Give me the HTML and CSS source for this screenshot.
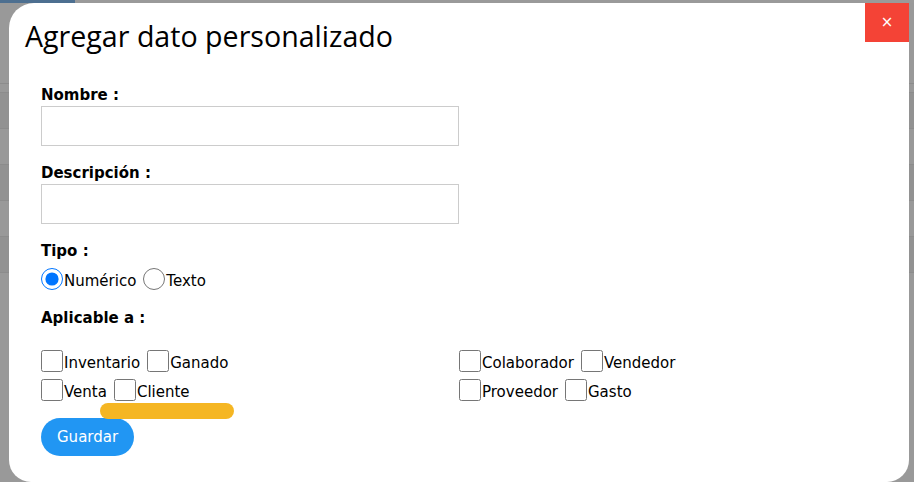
FILE: index.html
```html
<!DOCTYPE html>
<html lang="es">
<head>
<meta charset="utf-8">
<title>Agregar dato personalizado</title>
<link rel="stylesheet" href="styles.css">
</head>
<body>
<div class="backdrop">
  <div class="topbar"><div class="topbar-blue"></div></div>
  <div class="table">
    <div class="thead"></div>
    <div class="trow dark"></div>
    <div class="trow"></div>
    <div class="trow dark"></div>
    <div class="trow"></div>
    <div class="trow dark"></div>
  </div>
</div>

<div class="modal">
  <button class="close" type="button">&times;</button>
  <header class="modal-header">
    <h2 class="title">Agregar dato personalizado</h2>
  </header>
  <form class="form">
    <div class="group">
      <label class="label">Nombre :</label>
      <input class="field" type="text">
    </div>
    <div class="group">
      <label class="label">Descripción :</label>
      <input class="field" type="text">
    </div>
    <div class="group type-group">
      <label class="label">Tipo :</label>
      <div class="choice-row">
        <label class="choice"><input class="radio" type="radio" name="tipo" checked><span class="choice-text">Numérico</span></label>
        <label class="choice"><input class="radio" type="radio" name="tipo"><span class="choice-text">Texto</span></label>
      </div>
    </div>
    <div class="group applies">
      <label class="label">Aplicable a :</label>
      <div class="apply-grid">
        <div class="apply-col">
          <div class="choice-row">
            <label class="choice"><input class="check" type="checkbox"><span class="choice-text">Inventario</span></label>
            <label class="choice"><input class="check" type="checkbox"><span class="choice-text">Ganado</span></label>
          </div>
          <div class="choice-row">
            <label class="choice"><input class="check" type="checkbox"><span class="choice-text">Venta</span></label>
            <label class="choice"><input class="check" type="checkbox"><span class="choice-text">Cliente</span></label>
          </div>
        </div>
        <div class="apply-col">
          <div class="choice-row">
            <label class="choice"><input class="check" type="checkbox"><span class="choice-text">Colaborador</span></label>
            <label class="choice"><input class="check" type="checkbox"><span class="choice-text">Vendedor</span></label>
          </div>
          <div class="choice-row">
            <label class="choice"><input class="check" type="checkbox"><span class="choice-text">Proveedor</span></label>
            <label class="choice"><input class="check" type="checkbox"><span class="choice-text">Gasto</span></label>
          </div>
        </div>
      </div>
    </div>
    <button class="save" type="button">Guardar</button>
  </form>
  <span class="highlight"></span>
</div>
</body>
</html>
```

FILE: styles.css
```css
html, body {
  margin: 0;
  padding: 0;
}

body {
  width: 914px;
  height: 482px;
  overflow: hidden;
  background: #999999;
  font-family: "DejaVu Sans", Verdana, sans-serif;
  font-size: 15px;
  color: #000;
}

/* underlying page, dimmed by the overlay */
.backdrop {
  width: 100%;
}

.topbar {
  height: 3px;
  background: #9a9a9a;
}

.topbar-blue {
  width: 75px;
  height: 3px;
  background: #4d6f90;
}

.table {
  padding-top: 80px;
}

.thead {
  height: 8px;
  border-top: 1px solid #8c8c8c;
  border-bottom: 1px solid #8c8c8c;
}

.trow {
  height: 35px;
  border-bottom: 1px solid #8c8c8c;
}

.trow.dark {
  background: #929292;
}

/* modal */
.modal {
  position: fixed;
  left: 9px;
  top: 3px;
  width: 900px;
  height: 479px;
  box-sizing: border-box;
  background: #ffffff;
  border-radius: 25px 0 22px 22px;
}

.close {
  position: absolute;
  top: 0;
  right: 0;
  width: 44px;
  height: 39px;
  border: 0;
  padding: 0;
  background: #f44336;
  color: #ffffff;
  font-family: "DejaVu Sans", sans-serif;
  font-size: 15px;
  line-height: 39px;
  text-align: center;
}

.modal-header {
  padding: 14px 16px 0;
}

.title {
  margin: 0;
  font-family: "Open Sans", "Liberation Sans", sans-serif;
  font-weight: 400;
  font-size: 28.6px;
  line-height: 38px;
  color: #000;
}

.form {
  padding: 31px 32px 0;
}

.group {
  margin-bottom: 18px;
}

.type-group {
  margin-bottom: 19px;
}

.label {
  display: block;
  font-weight: 700;
  font-size: 15px;
  line-height: 18px;
  margin-bottom: 2px;
}

.field {
  display: block;
  width: 418px;
  height: 40px;
  box-sizing: border-box;
  margin: 0;
  border: 1px solid #cccccc;
  padding: 0 8px;
  font: inherit;
}

.choice-row {
  display: flex;
  gap: 7px;
  align-items: flex-start;
  height: 22px;
}

.type-group .choice-row {
  margin-top: 8px;
}

.choice {
  display: flex;
  align-items: flex-start;
  gap: 1px;
}

.choice-text {
  padding-top: 4px;
  line-height: 18px;
}

.radio,
.check {
  width: 22px;
  height: 22px;
  margin: 0;
}

.apply-grid {
  display: grid;
  grid-template-columns: 1fr 1fr;
  margin-top: 23px;
}

.apply-col {
  display: flex;
  flex-direction: column;
  gap: 7px;
}

.applies {
  margin-bottom: 17px;
}

.save {
  display: block;
  height: 38px;
  padding: 0 16px;
  border: 0;
  border-radius: 19px;
  background: #2196f3;
  color: #ffffff;
  font-family: "DejaVu Sans", sans-serif;
  font-size: 15px;
}

/* yellow marker annotation */
.highlight {
  position: absolute;
  left: 91px;
  top: 400px;
  width: 134px;
  height: 16px;
  border-radius: 8px;
  background: #f5b623;
}
```
